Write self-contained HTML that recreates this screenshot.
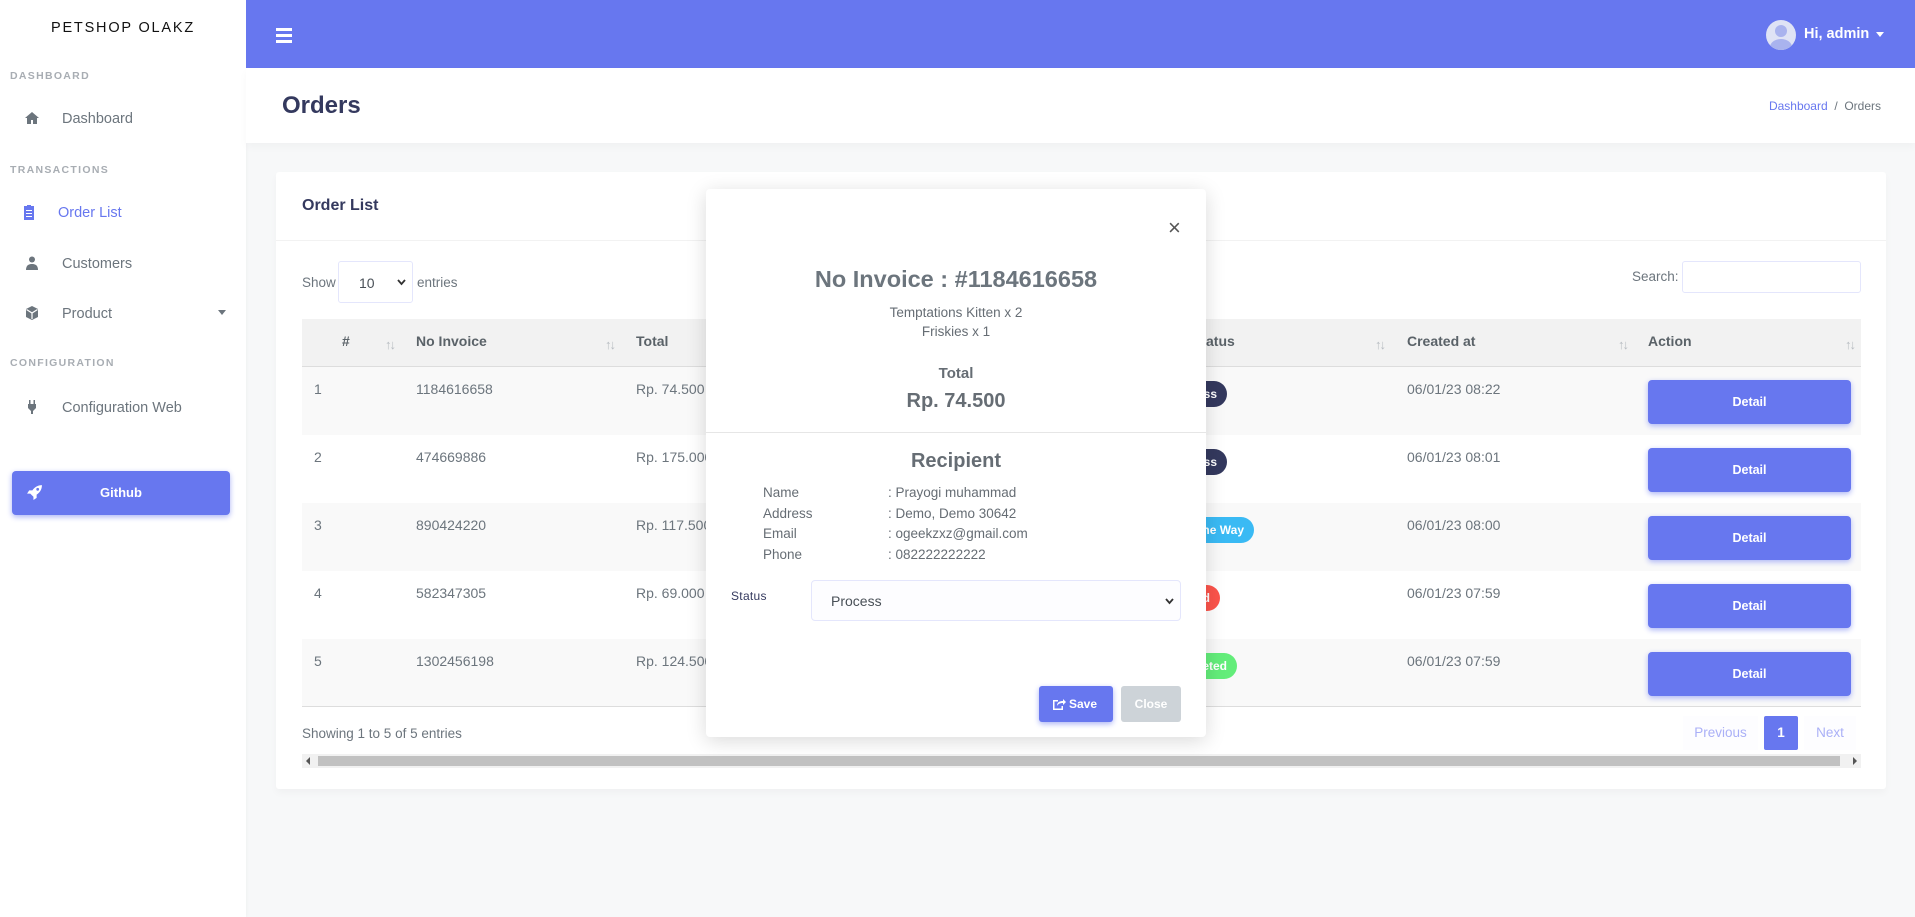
<!DOCTYPE html>
<html><head><meta charset="utf-8"><style>
*{box-sizing:border-box;margin:0;padding:0}
body{width:1915px;height:917px;position:relative;overflow:hidden;background:#f7f8f9;font-family:"Liberation Sans",sans-serif;font-size:14px;color:#6c757d}
.a{position:absolute;white-space:nowrap}
#side{position:absolute;left:0;top:0;width:246px;height:917px;background:#fff;box-shadow:1px 0 3px rgba(0,0,0,.03)}
.mh{font-size:10.5px;font-weight:bold;letter-spacing:1.3px;color:#a8adb3;left:10px}
.mi{left:62px;font-size:14.5px;color:#6c757d}
.ic{left:24px;width:16px;height:16px;fill:#6c757d}
#hdr{position:absolute;left:246px;top:0;width:1669px;height:68px;background:#6777ef}
#sec{position:absolute;left:246px;top:68px;width:1669px;height:75px;background:#fff;box-shadow:0 4px 8px rgba(0,0,0,.03)}
#card{position:absolute;left:276px;top:172px;width:1610px;height:617px;background:#fff;box-shadow:0 4px 8px rgba(0,0,0,.03);border-radius:3px}
.row{position:absolute;left:302px;width:1559px;height:68px}
.cell{position:absolute;top:14px;font-size:14px;color:#6c757d}
.btn{position:absolute;left:1346px;top:13px;width:203px;height:44px;background:#6777ef;border-radius:4px;color:#fff;font-size:12.5px;font-weight:bold;text-align:center;line-height:44px;box-shadow:0 2px 6px #acb5f6}
.bdg{position:absolute;top:14px;height:26px;border-radius:13px;color:#fff;font-size:12px;font-weight:bold;line-height:26px;padding:0 10px;text-align:right}
.srt{position:absolute;top:18px;font-size:13px;color:#b8bdc2;letter-spacing:-2px}
#modal{position:absolute;left:706px;top:189px;width:500px;height:548px;background:#fff;border-radius:4px;box-shadow:0 4px 20px rgba(0,0,0,.15);color:#666d74}
.c{left:0;width:500px;text-align:center}
</style></head><body>
<div id="side">
<div class="a" style="left:0;width:246px;text-align:center;top:20px;font-size:14.5px;letter-spacing:1.8px;color:#111">PETSHOP OLAKZ</div>
<div class="a mh" style="top:70px">DASHBOARD</div>
<svg class="a ic" style="top:110px" viewBox="0 0 16 16"><path d="M8 2L1 8h2v6h4v-4h2v4h4V8h2z"/></svg>
<div class="a mi" style="top:111px">Dashboard</div>
<div class="a mh" style="top:164px">TRANSACTIONS</div>
<svg class="a ic" style="top:204px;left:21px;fill:#6777ef" viewBox="0 0 16 16"><path d="M3 2h3V1h4v1h3v14H3z" /><path d="M5 6h6v1H5zM5 9h6v1H5zM5 12h6v1H5z" fill="#fff"/></svg>
<div class="a mi" style="top:205px;left:58px;color:#6777ef">Order List</div>
<svg class="a ic" style="top:255px" viewBox="0 0 16 16"><circle cx="8" cy="4.5" r="3"/><path d="M2 15c0-5 3-6 6-6s6 1 6 6z"/></svg>
<div class="a mi" style="top:256px">Customers</div>
<svg class="a ic" style="top:305px" viewBox="0 0 16 16"><path d="M8 1l6 3v8l-6 3-6-3V4z"/><path d="M8 8v6M2.5 4.5L8 8l5.5-3.5" stroke="#fff" stroke-width="1.2" fill="none"/></svg>
<div class="a mi" style="top:306px">Product</div>
<div class="a" style="left:218px;top:310px;border:4px solid transparent;border-top:5px solid #6c757d"></div>
<div class="a mh" style="top:357px">CONFIGURATION</div>
<svg class="a ic" style="top:399px" viewBox="0 0 16 16"><path d="M5 1h1.5v4h3V1H11v4h1v4l-3 3v3H7v-3L4 9V5h1z"/></svg>
<div class="a mi" style="top:400px">Configuration Web</div>
<div class="a" style="left:12px;top:471px;width:218px;height:44px;background:#6777ef;border-radius:4px;box-shadow:0 2px 6px #acb5f6;color:#fff;font-weight:bold;font-size:13px;line-height:44px;text-align:center">Github</div>
<svg class="a" style="left:26px;top:484px;width:17px;height:17px;fill:#fff" viewBox="0 0 16 16"><path d="M15 1c-4 0-7 2-9 5H3L1 9h3l3 3v3l3-2v-3c3-2 5-5 5-9z"/><circle cx="11" cy="5" r="1.3" fill="#6777ef"/></svg>
</div>
<div id="hdr">
<div class="a" style="left:30px;top:28px;width:16px;height:3px;background:#fff;box-shadow:0 6px 0 #fff,0 12px 0 #fff"></div>
<div class="a" style="left:1520px;top:20px;width:30px;height:30px;border-radius:50%;background:#dfe3f5;overflow:hidden"><div style="position:absolute;left:9px;top:5px;width:12px;height:12px;border-radius:50%;background:#a9b3ee"></div><div style="position:absolute;left:4px;top:19px;width:22px;height:16px;border-radius:50%;background:#a9b3ee"></div></div>
<div class="a" style="left:1558px;top:26px;color:#fff;font-weight:bold;font-size:14.5px">Hi, admin</div>
<div class="a" style="left:1630px;top:32px;border:4px solid transparent;border-top:5px solid #fff"></div>
</div>
<div id="sec">
<div class="a" style="left:36px;top:24px;font-size:24px;font-weight:bold;color:#34395e">Orders</div>
<div class="a" style="right:34px;top:31px;font-size:12px;color:#6c757d"><span style="color:#6777ef">Dashboard</span> &nbsp;/&nbsp; Orders</div>
</div>
<div id="card">
<div class="a" style="left:26px;top:25px;font-size:16px;font-weight:bold;color:#34395e">Order List</div>
<div class="a" style="left:0;top:68px;width:1610px;height:1px;background:#f2f2f2"></div>
</div>
<div class="a" style="left:302px;top:275px;font-size:13.5px">Show</div>
<div class="a" style="left:338px;top:261px;width:75px;height:42px;border:1px solid #e4e6fc;border-radius:3px;font-size:14px;color:#495057;padding:13px 0 0 20px">10</div>
<svg class="a" style="left:397px;top:279px;width:9px;height:7px" viewBox="0 0 9 7"><path d="M1 1l3.5 4L8 1" stroke="#333" stroke-width="1.8" fill="none"/></svg>
<div class="a" style="left:417px;top:275px;font-size:13.5px">entries</div>
<div class="a" style="left:1632px;top:269px;font-size:13.5px">Search:</div>
<div class="a" style="left:1682px;top:261px;width:179px;height:32px;border:1px solid #e4e6fc;border-radius:3px"></div>
<div class="row" style="top:319px;height:48px;background:#f2f2f2;border-bottom:1px solid #ddd">
<div class="cell" style="left:40px;top:14px;font-weight:bold;color:#5a6268">#</div>
<div class="srt" style="left:83px">↑↓</div>
<div class="cell" style="left:114px;top:14px;font-weight:bold;color:#5a6268">No Invoice</div>
<div class="srt" style="left:303px">↑↓</div>
<div class="cell" style="left:334px;top:14px;font-weight:bold;color:#5a6268">Total</div>
<div class="cell" style="left:890px;top:14px;font-weight:bold;color:#5a6268">Status</div>
<div class="srt" style="left:1073px">↑↓</div>
<div class="cell" style="left:1105px;top:14px;font-weight:bold;color:#5a6268">Created at</div>
<div class="srt" style="left:1316px">↑↓</div>
<div class="cell" style="left:1346px;top:14px;font-weight:bold;color:#5a6268">Action</div>
<div class="srt" style="left:1543px">↑↓</div>
</div>
<div class="row" style="top:367px;background:#f9f9f9"><div class="cell" style="left:12px">1</div><div class="cell" style="left:114px">1184616658</div><div class="cell" style="left:334px">Rp. 74.500</div><div class="bdg" style="left:800px;width:125px;background:#34395e">Process</div><div class="cell" style="left:1105px">06/01/23 08:22</div><div class="btn">Detail</div></div>
<div class="row" style="top:435px;background:#fff"><div class="cell" style="left:12px">2</div><div class="cell" style="left:114px">474669886</div><div class="cell" style="left:334px">Rp. 175.000</div><div class="bdg" style="left:800px;width:125px;background:#34395e">Process</div><div class="cell" style="left:1105px">06/01/23 08:01</div><div class="btn">Detail</div></div>
<div class="row" style="top:503px;background:#f9f9f9"><div class="cell" style="left:12px">3</div><div class="cell" style="left:114px">890424220</div><div class="cell" style="left:334px">Rp. 117.500</div><div class="bdg" style="left:800px;width:152px;background:#3abaf4">On The Way</div><div class="cell" style="left:1105px">06/01/23 08:00</div><div class="btn">Detail</div></div>
<div class="row" style="top:571px;background:#fff"><div class="cell" style="left:12px">4</div><div class="cell" style="left:114px">582347305</div><div class="cell" style="left:334px">Rp. 69.000</div><div class="bdg" style="left:800px;width:118px;background:#fc544b">Failed</div><div class="cell" style="left:1105px">06/01/23 07:59</div><div class="btn">Detail</div></div>
<div class="row" style="top:639px;background:#f9f9f9;border-bottom:1px solid #ddd"><div class="cell" style="left:12px">5</div><div class="cell" style="left:114px">1302456198</div><div class="cell" style="left:334px">Rp. 124.500</div><div class="bdg" style="left:800px;width:135px;background:#63ed7a">Completed</div><div class="cell" style="left:1105px">06/01/23 07:59</div><div class="btn">Detail</div></div>
<div class="a" style="left:302px;top:726px;font-size:13.5px">Showing 1 to 5 of 5 entries</div>
<div class="a" style="left:1683px;top:716px;width:75px;height:34px;background:#fdfdff;color:#aab0f7;font-size:13.5px;line-height:34px;text-align:center">Previous</div>
<div class="a" style="left:1764px;top:716px;width:34px;height:34px;background:#6777ef;color:#fff;font-weight:bold;font-size:13.5px;line-height:34px;text-align:center;border-radius:2px">1</div>
<div class="a" style="left:1804px;top:716px;width:52px;height:34px;background:#fdfdff;color:#aab0f7;font-size:13.5px;line-height:34px;text-align:center">Next</div>
<div class="a" style="left:302px;top:754px;width:1559px;height:14px;background:#f1f1f1"></div>
<div class="a" style="left:318px;top:756px;width:1522px;height:10px;background:#c1c1c1"></div>
<div class="a" style="left:306px;top:757px;border:4px solid transparent;border-right:4px solid #555;border-left:0"></div>
<div class="a" style="left:1853px;top:757px;border:4px solid transparent;border-left:4px solid #555;border-right:0"></div>

<div id="modal">
<div class="a" style="left:462px;top:26px;font-size:22px;color:#555">×</div>
<div class="a c" style="top:77px;font-size:23.5px;font-weight:bold;color:#6c757d">No Invoice : #1184616658</div>
<div class="a c" style="top:116px;font-size:13.5px">Temptations Kitten x 2</div>
<div class="a c" style="top:135px;font-size:13.5px">Friskies x 1</div>
<div class="a c" style="top:176px;font-size:15px;font-weight:bold">Total</div>
<div class="a c" style="top:201px;font-size:20px;font-weight:bold">Rp. 74.500</div>
<div class="a" style="left:0;top:243px;width:500px;height:1px;background:#e6e6e6"></div>
<div class="a c" style="top:261px;font-size:20px;font-weight:bold">Recipient</div>
<div class="a" style="left:57px;top:294px;font-size:13.5px;line-height:20.5px">Name<br>Address<br>Email<br>Phone</div>
<div class="a" style="left:182px;top:294px;font-size:13.5px;line-height:20.5px">: Prayogi muhammad<br>: Demo, Demo 30642<br>: ogeekzxz@gmail.com<br>: 082222222222</div>
<div class="a" style="left:25px;top:400px;font-size:12px;color:#34395e;letter-spacing:.3px">Status</div>
<div class="a" style="left:105px;top:391px;width:370px;height:41px;border:1px solid #e4e6fc;border-radius:4px;background:#fdfdff;font-size:14px;color:#495057;padding:12px 0 0 19px">Process</div>
<svg class="a" style="left:459px;top:409px;width:9px;height:7px" viewBox="0 0 9 7"><path d="M1 1l3.5 4L8 1" stroke="#333" stroke-width="1.8" fill="none"/></svg>
<div class="a" style="left:333px;top:497px;width:74px;height:36px;background:#6777ef;border-radius:3px;box-shadow:0 2px 6px #acb5f6;color:#fff;font-weight:bold;font-size:12px;line-height:36px;padding-left:30px">Save</div>
<svg class="a" style="left:346px;top:508px;width:14px;height:14px" viewBox="0 0 14 14"><path d="M1 3h5v1.5H2.5v7h7V9H11v4H1z" fill="#fff"/><path d="M5 9c0-4 3-5 6-5V2l3 3-3 3V6C8 6 6 7 5 9z" fill="#fff"/></svg>
<div class="a" style="left:415px;top:497px;width:60px;height:36px;background:#cdd3d8;border-radius:3px;color:#fff;font-weight:bold;font-size:12px;line-height:36px;text-align:center">Close</div>
</div>
</body></html>
